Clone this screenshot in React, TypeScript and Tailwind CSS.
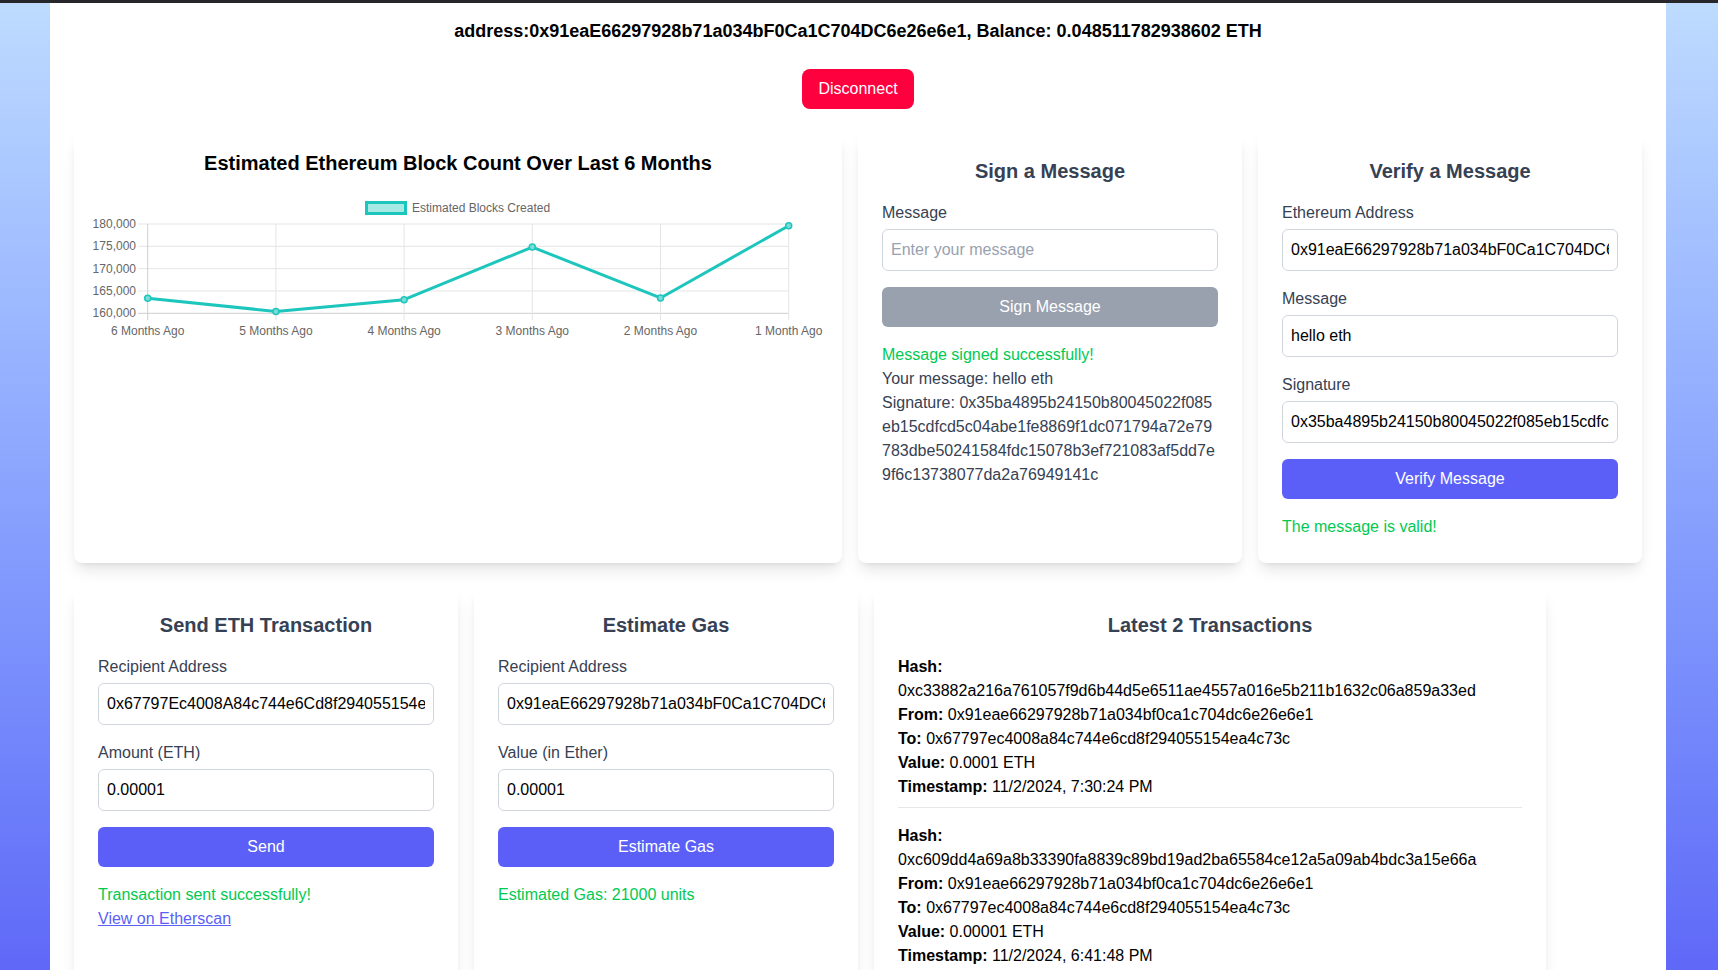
import React from 'react';

const months = ['6 Months Ago', '5 Months Ago', '4 Months Ago', '3 Months Ago', '2 Months Ago', '1 Month Ago'];
const blocks = [163371, 160420, 163056, 174831, 163438, 179618];
const ticks = [180000, 175000, 170000, 165000, 160000];

const txs = [
  {
    hash: '0xc33882a216a761057f9d6b44d5e6511ae4557a016e5b211b1632c06a859a33ed',
    from: '0x91eae66297928b71a034bf0ca1c704dc6e26e6e1',
    to: '0x67797ec4008a84c744e6cd8f294055154ea4c73c',
    value: '0.0001',
    time: '11/2/2024, 7:30:24 PM',
  },
  {
    hash: '0xc609dd4a69a8b33390fa8839c89bd19ad2ba65584ce12a5a09ab4bdc3a15e66a',
    from: '0x91eae66297928b71a034bf0ca1c704dc6e26e6e1',
    to: '0x67797ec4008a84c744e6cd8f294055154ea4c73c',
    value: '0.00001',
    time: '11/2/2024, 6:41:48 PM',
  },
];

function BlockChart() {
  // plot area in svg coords
  const x0 = 57.7;
  const step = 128.2;
  const yOf = (v: number) => 124.3 - ((v - 160000) / 20000) * 89.3;
  const pts = blocks.map((b, i) => [x0 + i * step, yOf(b)]);
  const xEnd = x0 + 5 * step;

  return (
    <svg width="736" height="160" viewBox="0 0 736 160" className="block">
      {/* legend */}
      <rect x="276.5" y="13.5" width="39" height="11" fill="#a6e9e5" stroke="#1dc6bd" strokeWidth="3" />
      <text x="322" y="23" fontSize="12" fill="#666" fontFamily="Liberation Sans, Arial, sans-serif">
        Estimated Blocks Created
      </text>

      {/* y grid + labels */}
      {ticks.map((t) => (
        <g key={t}>
          <line x1="48" x2={xEnd} y1={yOf(t)} y2={yOf(t)} stroke={t === 160000 ? '#cfcfcf' : '#e5e5e5'} strokeWidth="1" />
          <text x="46" y={yOf(t) + 4} fontSize="12" fill="#666" textAnchor="end" fontFamily="Liberation Sans, Arial, sans-serif">
            {t.toLocaleString('en-US')}
          </text>
        </g>
      ))}

      {/* x grid + labels */}
      {months.map((m, i) => (
        <g key={m}>
          <line x1={x0 + i * step} x2={x0 + i * step} y1={yOf(180000)} y2="131" stroke={i === 0 ? '#cfcfcf' : '#e5e5e5'} strokeWidth="1" />
          <text x={x0 + i * step} y="146" fontSize="12" fill="#666" textAnchor="middle" fontFamily="Liberation Sans, Arial, sans-serif">
            {m}
          </text>
        </g>
      ))}

      <polyline points={pts.map((p) => p.join(',')).join(' ')} fill="none" stroke="#1dc6bd" strokeWidth="3" strokeLinejoin="round" />
      {pts.map((p, i) => (
        <circle key={i} cx={p[0]} cy={p[1]} r="3" fill="#7ddcd6" stroke="#1dc6bd" strokeWidth="1.5" />
      ))}
    </svg>
  );
}

function Field({ label, value, placeholder }: { label: string; value?: string; placeholder?: string }) {
  return (
    <div className="mb-4">
      <label className="mb-1 block text-gray-700">{label}</label>
      <input
        readOnly
        value={value ?? ''}
        placeholder={placeholder}
        className="w-full rounded-md border border-gray-300 px-2 py-2 text-black outline-none placeholder:text-gray-400"
      />
    </div>
  );
}

function CardTitle({ children }: { children: React.ReactNode }) {
  return <h2 className="mb-4 text-center text-xl font-bold text-gray-700">{children}</h2>;
}

export default function App() {
  return (
    <div className="min-h-screen bg-linear-to-b from-blue-200 to-[#5a5ef6] font-['Liberation_Sans',Arial,sans-serif]">
      <div className="h-[3px] bg-[#26262b]" />
      <div className="ml-[50px] w-[1616px] bg-white px-6 pt-[14px] pb-6">
        <h1 className="text-center text-lg font-bold text-black">
          address:0x91eaE66297928b71a034bF0Ca1C704DC6e26e6e1, Balance: 0.048511782938602 ETH
        </h1>
        <div className="mt-6 flex justify-center">
          <button className="rounded-lg bg-[#ff003f] px-4 py-2 text-white">Disconnect</button>
        </div>

        {/* Top row */}
        <div className="mt-6 flex gap-4">
          <div className="w-[768px] shrink-0 rounded-lg bg-white p-4 shadow-lg">
            <h2 className="mb-[12px] text-center text-xl font-bold text-black">
              Estimated Ethereum Block Count Over Last 6 Months
            </h2>
            <BlockChart />
          </div>

          <div className="w-96 shrink-0 rounded-lg bg-white p-6 shadow-lg">
            <CardTitle>Sign a Message</CardTitle>
            <Field label="Message" placeholder="Enter your message" />
            <button className="w-full rounded-md bg-gray-400 py-2 text-white">Sign Message</button>
            <div className="mt-4 text-gray-700">
              <p className="text-green-500">Message signed successfully!</p>
              <p>Your message: hello eth</p>
              <p className="break-all">
                Signature: 0x35ba4895b24150b80045022f085eb15cdfcd5c04abe1fe8869f1dc071794a72e79783dbe50241584fdc15078b3ef721083af5dd7e9f6c13738077da2a76949141c
              </p>
            </div>
          </div>

          <div className="w-96 shrink-0 rounded-lg bg-white p-6 shadow-lg">
            <CardTitle>Verify a Message</CardTitle>
            <Field label="Ethereum Address" value="0x91eaE66297928b71a034bF0Ca1C704DC6e26e6e1" />
            <Field label="Message" value="hello eth" />
            <Field
              label="Signature"
              value="0x35ba4895b24150b80045022f085eb15cdfcd5c04abe1fe8869f1dc071794a72e79783dbe50241584fdc15078b3ef721083af5dd7e9f6c13738077da2a76949141c"
            />
            <button className="w-full rounded-md bg-[#5b5ff7] py-2 text-white">Verify Message</button>
            <p className="mt-4 text-green-500">The message is valid!</p>
          </div>
        </div>

        {/* Bottom row */}
        <div className="mt-6 flex gap-4">
          <div className="w-96 shrink-0 rounded-lg bg-white p-6 shadow-lg">
            <CardTitle>Send ETH Transaction</CardTitle>
            <Field label="Recipient Address" value="0x67797Ec4008A84c744e6Cd8f294055154eA4c73C" />
            <Field label="Amount (ETH)" value="0.00001" />
            <button className="w-full rounded-md bg-[#5b5ff7] py-2 text-white">Send</button>
            <p className="mt-4 text-green-500">Transaction sent successfully!</p>
            <a href="#" className="text-[#5b5ff7] underline">
              View on Etherscan
            </a>
          </div>

          <div className="w-96 shrink-0 rounded-lg bg-white p-6 shadow-lg">
            <CardTitle>Estimate Gas</CardTitle>
            <Field label="Recipient Address" value="0x91eaE66297928b71a034bF0Ca1C704DC6e26e6e1" />
            <Field label="Value (in Ether)" value="0.00001" />
            <button className="w-full rounded-md bg-[#5b5ff7] py-2 text-white">Estimate Gas</button>
            <p className="mt-4 text-green-500">Estimated Gas: 21000 units</p>
          </div>

          <div className="w-[672px] shrink-0 rounded-lg bg-white p-6 shadow-lg">
            <CardTitle>Latest 2 Transactions</CardTitle>
            <ul className="text-black">
              {txs.map((tx) => (
                <li key={tx.hash} className="mb-4 border-b border-gray-200 pb-2">
                  <p>
                    <strong>Hash:</strong> {tx.hash}
                  </p>
                  <p>
                    <strong>From:</strong> {tx.from}
                  </p>
                  <p>
                    <strong>To:</strong> {tx.to}
                  </p>
                  <p>
                    <strong>Value:</strong> {tx.value} ETH
                  </p>
                  <p>
                    <strong>Timestamp:</strong> {tx.time}
                  </p>
                </li>
              ))}
            </ul>
          </div>
        </div>
      </div>
    </div>
  );
}
